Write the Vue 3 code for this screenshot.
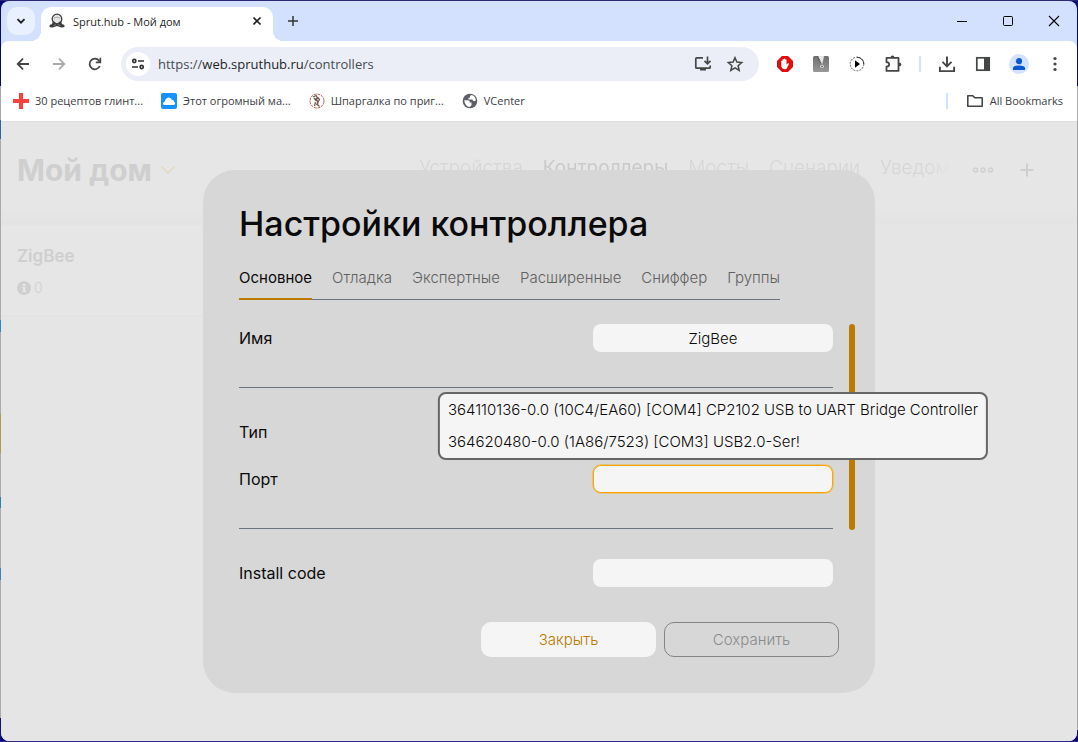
<script setup>
import { ref } from 'vue'

const bookmarks = [
  { icon: 'cross', label: '30 рецептов глинт...' },
  { icon: 'cloud', label: 'Этот огромный ма...' },
  { icon: 'seal', label: 'Шпаргалка по приг...' },
  { icon: 'globe', label: 'VCenter' },
]
const sections = ['Устройства', 'Контроллеры', 'Мосты', 'Сценарии', 'Уведом']
const activeSection = ref('Контроллеры')
const tabs = ['Основное', 'Отладка', 'Экспертные', 'Расширенные', 'Сниффер', 'Группы']
const activeTab = ref('Основное')
const address = { scheme: 'https://', host: 'web.spruthub.ru', path: '/controllers' }
const name = ref('ZigBee')
const port = ref('')
const installCode = ref('')
const ports = [
  '364110136-0.0 (10C4/EA60) [COM4] CP2102 USB to UART Bridge Controller',
  '364620480-0.0 (1A86/7523) [COM3] USB2.0-Ser!',
]
</script>

<template>
  <div class="desktop">
    <div class="window">
      <header class="tabstrip">
        <button class="tab-search" aria-label="Search tabs">
          <svg width="10" height="10" viewBox="0 0 10 10"><path d="M1.5 3.2 5 6.7l3.5-3.5" fill="none" stroke="#1f1f1f" stroke-width="1.9" /></svg>
        </button>
        <div class="tab">
          <svg width="16" height="16" viewBox="0 0 16 16">
            <circle cx="8" cy="6" r="4.800" fill="#e4e4e4" stroke="#3d3d3d" stroke-width="1.300" />
            <path d="M5 5.200Q8 3 11 5.200" fill="none" stroke="#aaa" />
            <path d="M3.600 9Q5 7.800 6.300 9.500L8 10.800 9.700 9.500Q11 7.800 12.400 9L13 11.300Q15.300 11 15.800 13.300 14.500 15 11.500 14.300L8 13 4.500 14.300Q1.500 15 .2 13.300.7 11 3 11.300z" fill="#3d3d3d" />
            <path d="M4.600 13 7 11.300M11.400 13 9 11.300" stroke="#999" stroke-width=".7" />
          </svg>
          <span class="tab-title">Sprut.hub - Мой дом</span>
          <button class="tab-close" aria-label="Close tab">
            <svg width="10" height="10" viewBox="0 0 10 10"><path d="m1.500 1.500 7 7m0-7-7 7" stroke="#1f1f1f" stroke-width="1.7" /></svg>
          </button>
        </div>
        <button class="new-tab" aria-label="New tab">
          <svg width="12" height="12" viewBox="0 0 12 12"><path d="M6 1v10M1 6h10" stroke="#333" stroke-width="1.500" /></svg>
        </button>
        <div class="caption">
          <button aria-label="Minimize"><svg width="12" height="12" viewBox="0 0 12 12"><path d="M1 6.500h10" stroke="#000" /></svg></button>
          <button aria-label="Maximize"><svg width="12" height="12" viewBox="0 0 12 12"><rect x="1.500" y="1.500" width="9" height="9" rx="1" fill="none" stroke="#000" /></svg></button>
          <button aria-label="Close"><svg width="12" height="12" viewBox="0 0 12 12"><path d="m1 1 10 10M11 1 1 11" stroke="#000" stroke-width="1.100" /></svg></button>
        </div>
      </header>

      <div class="chrome">
        <div class="toolbar">
          <button class="tool" aria-label="Back">
            <svg width="16" height="16" viewBox="0 0 16 16"><path d="M14 8H3M8 2.700 2.700 8 8 13.300" fill="none" stroke="#444746" stroke-width="1.800" /></svg>
          </button>
          <button class="tool" aria-label="Forward">
            <svg width="16" height="16" viewBox="0 0 16 16"><path d="M2 8h11M8 2.700 13.300 8 8 13.300" fill="none" stroke="#a9abab" stroke-width="1.800" /></svg>
          </button>
          <button class="tool" aria-label="Reload">
            <svg width="16" height="16" viewBox="0 0 16 16"><path d="M12.800 10A5.300 5.300 0 1 1 12 4.600L13.600 6" fill="none" stroke="#444746" stroke-width="1.800" /><path d="M14.200 1.800v5.400H8.800V5.500h3.700V1.800z" fill="#444746" /></svg>
          </button>
          <div class="omnibox">
            <button class="site-info" aria-label="Site information">
              <svg width="14" height="14" viewBox="0 0 14 14" fill="none" stroke="#303134" stroke-width="1.600"><circle cx="3.300" cy="4" r="1.600" /><path d="M7 4h6M1 10h6" /><circle cx="10.700" cy="10" r="1.600" /></svg>
            </button>
            <a class="url" href="#">{{ address.scheme }}<span>{{ address.host }}</span>{{ address.path }}</a>
            <button class="in-box" aria-label="Install app">
              <svg width="18" height="18" viewBox="0 0 18 18" fill="none" stroke="#444746" stroke-width="1.700"><path d="M9 2.800H2.800Q1.800 2.800 1.800 3.800v8.400q0 1 1 1h12.400q1 0 1-1V10.500M13.500 1.500v6.500M10.500 5.800l3 3 3-3" /><path d="M6 13.500h6v2H6z" fill="#444746" stroke="none" /></svg>
            </button>
            <button class="in-box" aria-label="Bookmark this tab">
              <svg width="18" height="18" viewBox="0 0 18 18"><path d="m9 2.700 1.900 4.400 4.800.4-3.600 3.200 1.100 4.700L9 12.900l-4.200 2.500 1.100-4.700-3.600-3.200 4.800-.4z" fill="none" stroke="#444746" stroke-width="1.500" /></svg>
            </button>
          </div>
          <button class="tool" aria-label="Content blocker">
            <svg width="16" height="16" viewBox="0 0 16 16"><path d="M5 0h6l5 5v6l-5 5H5l-5-5V5z" fill="#e40d0d" /><path d="M4.200 7.500V5q.7-.9 1.300 0v2V3.500q.7-.9 1.300 0V7 3q.8-.9 1.400 0v4V3.700q.7-.9 1.300 0V8.600l1.400-1.300q1-.3 1 .6L10 12q-.6 1.200-1.800 1.200Q4.200 13.200 4.200 9z" fill="#fff" /></svg>
          </button>
          <button class="tool" aria-label="Archive extension">
            <svg width="16" height="16" viewBox="0 0 16 16"><defs><linearGradient id="zip" x1="0" y1="0" x2="0" y2="1"><stop stop-color="#6f6f6f" /><stop offset="1" stop-color="#989898" /></linearGradient></defs><rect width="16" height="16" rx="1.500" fill="url(#zip)" /><path d="M4.500 0h7L9.600 8.500H8.400z" fill="#e6e6e6" /><path d="m4.500 0 4 8.500" stroke="#4a4a4a" stroke-width="1.300" stroke-dasharray="1.200 .5" /><path d="M11.500 0 9.700 8" stroke="#777" stroke-dasharray="1.200 .5" /><circle cx="9" cy="10.500" r="2.200" fill="#f2f2f2" stroke="#666" stroke-width=".6" /><circle cx="9" cy="10.500" r=".9" fill="#555" /></svg>
          </button>
          <button class="tool" aria-label="Media extension">
            <svg width="16" height="16" viewBox="0 0 16 16"><circle cx="8" cy="8" r="6.800" fill="none" stroke="#555" stroke-dasharray="1.800 1.300" /><path d="M8 1.200A6.800 6.800 0 0 1 14.800 8" fill="none" stroke="#333" /><path d="M6 4.200 11 8l-5 3.800z" fill="#000" /></svg>
          </button>
          <button class="tool" aria-label="Extensions">
            <svg width="18" height="18" viewBox="0 0 18 18"><path d="M2.500 2.900h12v13h-12v-4.300q2.700-.3 2.700-2.200T2.500 7.200z" fill="none" stroke="#444746" stroke-width="1.800" stroke-linejoin="round" /><path d="M6.500 2.700q0-2.200 2-2.200t2 2.200zM14.700 7.400q2.700 0 2.700 2t-2.700 2z" fill="#444746" /></svg>
          </button>
          <i class="divider"></i>
          <button class="tool" aria-label="Downloads">
            <svg width="18" height="18" viewBox="0 0 18 18"><path d="M9 1.500v9.300M4.500 6.800 9 11.300l4.500-4.500M1.900 11.800v4.300h14.200v-4.300" fill="none" stroke="#444746" stroke-width="1.900" /></svg>
          </button>
          <button class="tool" aria-label="Side panel">
            <svg width="16" height="16" viewBox="0 0 16 16"><rect x="1.800" y="1.800" width="12.400" height="12.400" fill="none" stroke="#444746" stroke-width="1.700" /><path d="M9 1h5q1 0 1 1v12q0 1-1 1H9z" fill="#444746" /></svg>
          </button>
          <button class="tool" aria-label="Profile">
            <svg width="20" height="20" viewBox="0 0 20 20"><circle cx="10" cy="10" r="10" fill="#d3e3fd" /><circle cx="10" cy="7.200" r="3.100" fill="#0b57d0" /><path d="M4 16v-1.800Q4 11.600 10 11.600t6 2.600V16z" fill="#0b57d0" /></svg>
          </button>
          <button class="tool" aria-label="Menu">
            <svg width="4" height="16" viewBox="0 0 4 16" fill="#444746"><circle cx="2" cy="2.500" r="1.600" /><circle cx="2" cy="8" r="1.600" /><circle cx="2" cy="13.500" r="1.600" /></svg>
          </button>
        </div>

        <nav class="bookmarks">
          <a v-for="b in bookmarks" :key="b.label" href="#" class="bookmark">
            <svg width="16" height="16" viewBox="0 0 16 16">
              <path v-if="b.icon === 'cross'" d="M6 0h4v6h6v4h-6v6H6v-6H0V6h6z" fill="#f9423f" />
              <template v-else-if="b.icon === 'cloud'"><rect width="16" height="16" rx="2" fill="#1593fb" /><path d="M3.500 12q-1.500 0-1.500-1.600 0-1.500 1.700-1.700Q4.500 5 7.500 4.500q2.400 0 3.300 2.300 2.300.1 2.400 2.100 1.100.4 1 1.700-.2 1.400-1.500 1.400z" fill="#fff" /></template>
              <template v-else-if="b.icon === 'seal'"><circle cx="8" cy="8" r="7" fill="#fff" stroke="#c0685c" stroke-dasharray="3 .7" /><path d="m4 4 3-1.500L8.500 5 7 7l2 1.500L8 11l2.500 2.500M5 5l2 2.500M6.500 9l-1 4M9 4.500l1.500 2L9 9M7 5l2 5-1.500 2" fill="none" stroke="#735b54" stroke-width="1.300" /></template>
              <template v-else><circle cx="8" cy="8" r="7.300" fill="#5b5f65" /><path d="M2.200 7.300H6q1.800.1 1.800 1.700v.4h1.700v2.800l-1.600 1.900Q3 13.500 2.200 7.300M8 3.600Q8 2 9.800 2q3.800 1.100 4.100 5.500-2.400 1.500-3.400-.4V6.500H6.500V4.800H8z" fill="#fff" /></template>
            </svg>
            {{ b.label }}
          </a>
          <i class="divider push"></i>
          <a href="#" class="bookmark all">
            <svg width="18" height="14" viewBox="0 0 18 14"><path d="M1.800 12.200V1.800h5l1.900 2h7.500v8.400z" fill="none" stroke="#444746" stroke-width="1.600" stroke-linejoin="round" /></svg>
            All Bookmarks
          </a>
        </nav>
      </div>

      <main class="page">
        <div class="app-head">
          <h1>Мой дом</h1>
          <svg class="chev" width="16" height="10" viewBox="0 0 16 10"><path d="m1.500 1.500 6.500 6.500 6.500-6.500" fill="none" stroke="#e2d8c4" stroke-width="1.600" /></svg>
          <nav class="sections">
            <a v-for="s in sections" :key="s" href="#" :class="{ active: s === activeSection }">{{ s }}</a>
          </nav>
          <button class="more" aria-label="Ещё">
            <svg width="22" height="8" viewBox="0 0 22 8" fill="none" stroke="#cecece" stroke-width="1.300"><circle cx="3.500" cy="4" r="2" /><circle cx="11" cy="4" r="2" /><circle cx="18.500" cy="4" r="2" /></svg>
          </button>
          <button class="more add" aria-label="Добавить">
            <svg width="14" height="14" viewBox="0 0 14 14"><path d="M7 .5v13M.5 7h13" stroke="#cecece" stroke-width="2" /></svg>
          </button>
        </div>
        <div class="card">
          <h2>ZigBee</h2>
          <p>
            <svg width="14" height="14" viewBox="0 0 14 14"><circle cx="7" cy="7" r="7" fill="#cfcfcf" /><path d="M6 3h2.200v2H6zM5.200 6h3v3.800h1v1.200h-4V9.800h1V7.200h-1z" fill="#e8e8e8" /></svg>
            0
          </p>
        </div>

        <div class="overlay">
          <section class="dialog" role="dialog" aria-labelledby="dialog-title">
            <h2 id="dialog-title">Настройки контроллера</h2>
            <div class="tabs" role="tablist">
              <button v-for="t in tabs" :key="t" role="tab" :aria-selected="t === activeTab" :class="{ active: t === activeTab }" @click="activeTab = t">{{ t }}</button>
            </div>
            <div class="body">
              <form class="fields" @submit.prevent>
                <div class="row">
                  <label for="f-name">Имя</label>
                  <input id="f-name" v-model="name" class="field" type="text" />
                </div>
                <hr />
                <div class="row">
                  <label for="f-type">Тип</label>
                  <select id="f-type" class="field"></select>
                </div>
                <div class="row">
                  <label for="f-port">Порт</label>
                  <div class="combo">
                    <input id="f-port" v-model="port" class="field focused" type="text" role="combobox" aria-expanded="true" aria-controls="port-list" />
                    <div id="port-list" class="menu" role="listbox">
                      <button v-for="p in ports" :key="p" type="button" role="option" @click="port = p">{{ p }}</button>
                    </div>
                  </div>
                </div>
                <hr />
                <div class="row">
                  <label for="f-code">Install code</label>
                  <input id="f-code" v-model="installCode" class="field" type="text" />
                </div>
              </form>
              <div class="scroll"></div>
            </div>
            <footer class="actions">
              <button class="close">Закрыть</button>
              <button class="save" disabled>Сохранить</button>
            </footer>
          </section>
        </div>
      </main>
    </div>
  </div>
</template>

<style>
body {
  margin: 0;
}
</style>

<style scoped>
* {
  box-sizing: border-box;
}
button {
  padding: 0;
  border: 0;
  background: none;
  font: inherit;
  color: inherit;
}
a {
  color: inherit;
  text-decoration: none;
}
svg {
  display: block;
  flex: none;
}
.desktop {
  min-height: 100vh;
  padding: 1px;
  display: flex;
  background:
    linear-gradient(#2e2878, #2e2878) top / 100% 1px no-repeat,
    linear-gradient(#2e2878, #2e2878) bottom / 100% 1px no-repeat,
    linear-gradient(#060a70 0 86px, #aaa 86px 120px, #2a66a8 120px 139px, #aaa 139px 320px, #2e86c4 320px 332px, #aaa 332px 414px, #b09a50 414px 453px, #aaa 453px 497px, #2a83a8 497px 508px, #aaa 508px 568px, #3584c0 568px 580px, #aaa 580px 718px, #101075 718px) left / 1px 100% no-repeat,
    linear-gradient(#060a70 0 86px, #a8a8a8 86px 730px, #101075 730px) right / 1px 100% no-repeat,
    #050580;
}
.window {
  flex: 1;
  min-width: 0;
  display: flex;
  flex-direction: column;
  border-radius: 8px;
  overflow: hidden;
  background: #d3e1ff;
  font-family: "Open Sans", "Noto Sans", sans-serif;
  font-size: 11px;
  color: #1f1f1f;
}
.tabstrip {
  height: 40px;
  padding-left: 6px;
  display: flex;
}
.tab-search {
  width: 28px;
  height: 28px;
  margin: 6px 6px 0 0;
  display: grid;
  place-items: center;
  border-radius: 10px;
  background: #e9f0ff;
}
.tab {
  position: relative;
  width: 232px;
  margin-top: 6px;
  padding: 0 8px 6px;
  display: flex;
  align-items: center;
  gap: 8px;
  border-radius: 10px 10px 0 0;
  background: #fff;
}
.tab::before,
.tab::after {
  content: "";
  position: absolute;
  bottom: 0;
  width: 10px;
  height: 10px;
}
.tab::before {
  right: 100%;
  background: radial-gradient(circle at 0 0, transparent 10px, #fff 10px);
}
.tab::after {
  left: 100%;
  background: radial-gradient(circle at 100% 0, transparent 10px, #fff 10px);
}
.tab-title {
  flex: 1;
}
.tab-close {
  width: 16px;
  height: 16px;
  display: grid;
  place-items: center;
}
.new-tab {
  width: 28px;
  height: 28px;
  margin: 6px 0 0 6px;
  display: grid;
  place-items: center;
}
.caption {
  margin-left: auto;
  display: flex;
}
.caption button {
  width: 46px;
  display: grid;
  place-items: center;
}
.chrome {
  background: #fff;
  border-radius: 8px 8px 0 0;
  border-bottom: 1px solid #dfdfdf;
}
.toolbar {
  height: 46px;
  padding: 0 8px;
  display: flex;
  align-items: center;
  gap: 8px;
}
.tool {
  width: 28px;
  height: 28px;
  display: grid;
  place-items: center;
}
.omnibox {
  flex: 1;
  min-width: 0;
  height: 34px;
  margin: 0 4px;
  padding: 0 12px 0 5px;
  display: flex;
  align-items: center;
  gap: 8px;
  border-radius: 17px;
  background: #ebeef7;
}
.site-info {
  width: 24px;
  height: 24px;
  display: grid;
  place-items: center;
  border-radius: 50%;
  background: #fff;
}
.url {
  flex: 1;
  min-width: 0;
  font-size: 13px;
  color: #474b50;
}
.url span {
  color: #1f1f1f;
}
.in-box {
  width: 24px;
  height: 24px;
  display: grid;
  place-items: center;
}
.divider {
  width: 2px;
  height: 16px;
  margin: 0 4px;
  background: #d3e3fd;
}
.bookmarks {
  height: 34px;
  padding: 0 14px 6px 12px;
  display: flex;
  align-items: center;
  gap: 18px;
}
.bookmark {
  display: flex;
  align-items: center;
  gap: 6px;
  line-height: 14px;
  color: #3c4043;
  white-space: nowrap;
}
.push {
  margin: 0 0 0 auto;
}
.page {
  position: relative;
  flex: 1;
  background: #e5e5e5;
  font-family: Inter, "Noto Sans", sans-serif;
  color: #cfcfcf;
}
.app-head {
  height: 103px;
  padding: 0 43px 8px 16px;
  display: flex;
  align-items: center;
  background: linear-gradient(#e6e6e6 85px, #e3e3e3 100%);
}
.app-head h1 {
  margin: 0;
  font-size: 30px;
  line-height: 40px;
  font-weight: 700;
}
.chev {
  margin-left: 8px;
}
.sections {
  margin-left: auto;
  padding-bottom: 4px;
  display: flex;
  gap: 20px;
  font-size: 19px;
  line-height: 28px;
  font-weight: 300;
  color: #d6d6d6;
  mask-image: linear-gradient(90deg, #000 96%, transparent);
}
.sections .active {
  font-weight: 400;
  color: #cacaca;
}
.more {
  margin-left: 22px;
}
.more.add {
  margin-left: 26px;
}
.card {
  width: 320px;
  padding: 19px 16px 17px;
  border-bottom: 2px solid #e3e3e3;
  background: #e6e6e6;
}
.card h2 {
  margin: 0;
  font-size: 17px;
  line-height: 24px;
  font-weight: 600;
}
.card p {
  margin: 10px 0 0;
  display: flex;
  align-items: center;
  gap: 3px;
  font-size: 14px;
  line-height: 20px;
  font-weight: 300;
}
.overlay {
  position: absolute;
  inset: 0;
  display: flex;
  align-items: center;
  justify-content: center;
}
.dialog {
  width: 672px;
  max-width: 100%;
  padding: 36px;
  border-radius: 32px;
  background: #d7d7d7;
  color: #0a0a0a;
}
.dialog h2 {
  margin: 0;
  font-size: 34px;
  line-height: 36px;
  font-weight: 500;
}
.tabs {
  width: fit-content;
  margin-top: 24px;
  display: flex;
  gap: 20px;
  border-bottom: 1px solid #6b7280;
  font-size: 15px;
  line-height: 24px;
  font-weight: 300;
  color: #606060;
}
.tabs button {
  padding-bottom: 8px;
  border-bottom: 1px solid transparent;
}
.tabs .active {
  font-weight: 400;
  color: #0a0a0a;
  border-color: #bb7a00;
  box-shadow: 0 1px #bb7a00;
}
.body {
  margin-top: 24px;
  margin-right: -16px;
  display: flex;
  gap: 16px;
}
.fields {
  flex: 1;
  display: flex;
  flex-direction: column;
  gap: 19px;
}
.row {
  display: flex;
  align-items: center;
  justify-content: space-between;
  font-size: 16px;
  line-height: 28px;
}
.fields hr {
  width: 100%;
  height: 1px;
  margin: 16px 0 11px;
  border: 0;
  background: #6b7280;
}
.field {
  display: block;
  width: 240px;
  height: 28px;
  padding: 0 8px;
  border: 0;
  border-radius: 8px;
  outline: 0;
  appearance: none;
  background: #f5f5f5;
  color: #0a0a0a;
  font: 300 15px Inter, sans-serif;
  text-align: center;
}
.combo {
  position: relative;
}
.focused {
  border: 1px solid #ffa500;
  box-shadow: 0 0 0 1px #ffa50066;
}
.menu {
  position: absolute;
  left: 50%;
  bottom: 33px;
  z-index: 2;
  transform: translateX(-50%);
  display: flex;
  flex-direction: column;
  border: 2px solid #666;
  border-radius: 8px;
  background: #f5f5f5;
  font-size: 15px;
  line-height: 32px;
  font-weight: 300;
}
.menu button {
  padding: 0 8px;
  text-align: left;
  white-space: nowrap;
}
.scroll {
  width: 6px;
  height: 206px;
  border-radius: 3px;
  background: #bb7a00;
}
.actions {
  margin-top: 35px;
  display: flex;
  justify-content: flex-end;
  gap: 8px;
  font-size: 15px;
  font-weight: 300;
}
.actions button {
  width: 175px;
  height: 35px;
  border-radius: 10px;
}
.actions .close {
  background: #f5f5f5;
  color: #bb7a00;
}
.actions .save {
  border: 1px solid #858585;
  color: #8b8b8b;
}
</style>
